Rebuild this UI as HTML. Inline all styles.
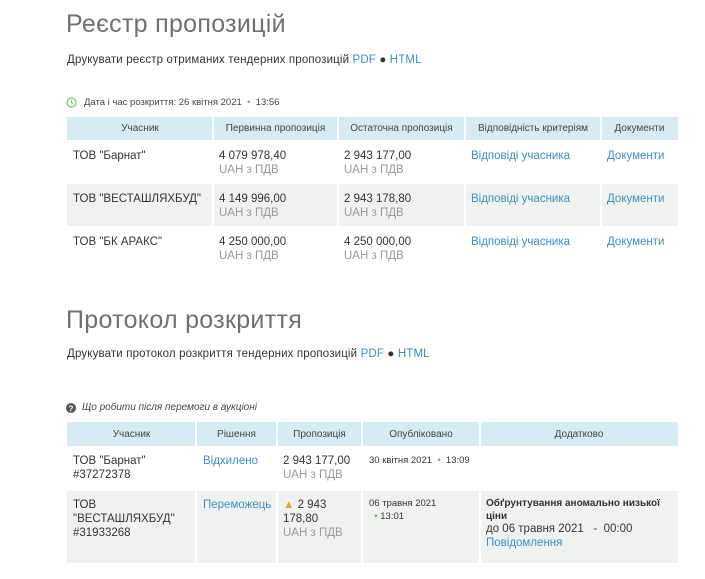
<!DOCTYPE html>
<html><head><meta charset="utf-8"><style>
body{margin:0;width:705px;height:579px;background:#fff;font-family:"Liberation Sans","DejaVu Sans",sans-serif;color:#333;position:relative;overflow:hidden}
.a{position:absolute;white-space:nowrap}
.h1{font-size:25px;color:#707070;letter-spacing:0.3px}
.p{font-size:11.5px;color:#333;letter-spacing:0.15px}
.l{color:#3a8fc4}
.hd{background:#d6ebf3;position:absolute;font-size:10px;color:#444;text-align:center;line-height:23px}
.g{background:#f0f2f0;position:absolute}
.v{position:absolute;width:2px;background:#fff}
.t{font-size:11.5px;line-height:14px}
.s{color:#999}
.gd{color:#5bb55b}
</style></head><body>
<div class="a h1" style="left:66px;top:10px">Реєстр пропозицій</div>
<div class="a p" style="left:67px;top:54px">Друкувати реєстр отриманих тендерних пропозицій <span class="l">PDF</span> ● <span class="l">HTML</span></div>

<svg class="a" style="left:66px;top:97px" width="11" height="11" viewBox="0 0 11 11"><circle cx="5.5" cy="5.5" r="4.5" fill="none" stroke="#7cc47c" stroke-width="1.3"/><path d="M5.5 3v2.7l1.8 1.2" fill="none" stroke="#7cc47c" stroke-width="1.1"/></svg>
<div class="a" style="left:84px;top:97px;font-size:9.5px;color:#444">Дата і час розкриття: 26 квітня 2021 &nbsp;<span class="gd">•</span>&nbsp; 13:56</div>

<div class="hd" style="left:67px;top:117px;width:611px;height:23px"></div>
<div class="a hd" style="left:67px;top:117px;width:146px;background:none">Учасник</div>
<div class="a hd" style="left:213px;top:117px;width:125px;background:none">Первинна пропозиція</div>
<div class="a hd" style="left:338px;top:117px;width:127px;background:none">Остаточна пропозиція</div>
<div class="a hd" style="left:465px;top:117px;width:136px;background:none">Відповідність критеріям</div>
<div class="a hd" style="left:601px;top:117px;width:77px;background:none">Документи</div>
<div class="g" style="left:67px;top:184px;width:611px;height:42px"></div>
<div class="v" style="left:212px;top:117px;height:109px"></div>
<div class="v" style="left:337px;top:117px;height:109px"></div>
<div class="v" style="left:464px;top:117px;height:109px"></div>
<div class="v" style="left:600px;top:117px;height:109px"></div>

<div class="a t" style="left:73px;top:149px">ТОВ "Барнат"</div>
<div class="a t" style="left:219px;top:149px">4 079 978,40<br><span class="s">UAH з ПДВ</span></div>
<div class="a t" style="left:344px;top:149px">2 943 177,00<br><span class="s">UAH з ПДВ</span></div>
<div class="a t l" style="left:471px;top:149px">Відповіді учасника</div>
<div class="a t l" style="left:607px;top:149px">Документи</div>

<div class="a t" style="left:73px;top:192px">ТОВ "ВЕСТАШЛЯХБУД"</div>
<div class="a t" style="left:219px;top:192px">4 149 996,00<br><span class="s">UAH з ПДВ</span></div>
<div class="a t" style="left:344px;top:192px">2 943 178,80<br><span class="s">UAH з ПДВ</span></div>
<div class="a t l" style="left:471px;top:192px">Відповіді учасника</div>
<div class="a t l" style="left:607px;top:192px">Документи</div>

<div class="a t" style="left:73px;top:235px">ТОВ "БК АРАКС"</div>
<div class="a t" style="left:219px;top:235px">4 250 000,00<br><span class="s">UAH з ПДВ</span></div>
<div class="a t" style="left:344px;top:235px">4 250 000,00<br><span class="s">UAH з ПДВ</span></div>
<div class="a t l" style="left:471px;top:235px">Відповіді учасника</div>
<div class="a t l" style="left:607px;top:235px">Документи</div>

<div class="a h1" style="left:66px;top:306px">Протокол розкриття</div>
<div class="a p" style="left:67px;top:348px">Друкувати протокол розкриття тендерних пропозицій <span class="l">PDF</span> ● <span class="l">HTML</span></div>

<svg class="a" style="left:66px;top:403px" width="10" height="10" viewBox="0 0 10 10"><circle cx="5" cy="5" r="5" fill="#555"/><text x="5" y="8.3" font-size="8" font-weight="bold" fill="#fff" text-anchor="middle" font-family="Liberation Sans">?</text></svg>
<div class="a" style="left:82px;top:402px;font-size:10px;color:#444;font-style:italic">Що робити після перемоги в аукціоні</div>

<div class="hd" style="left:67px;top:422px;width:611px;height:24px"></div>
<div class="a hd" style="left:67px;top:423px;width:129px;background:none">Учасник</div>
<div class="a hd" style="left:196px;top:423px;width:81px;background:none">Рішення</div>
<div class="a hd" style="left:277px;top:423px;width:85px;background:none">Пропозиція</div>
<div class="a hd" style="left:362px;top:423px;width:118px;background:none">Опубліковано</div>
<div class="a hd" style="left:480px;top:423px;width:198px;background:none">Додатково</div>
<div class="g" style="left:67px;top:491px;width:611px;height:72px"></div>
<div class="v" style="left:195px;top:422px;height:141px"></div>
<div class="v" style="left:276px;top:422px;height:141px"></div>
<div class="v" style="left:361px;top:422px;height:141px"></div>
<div class="v" style="left:479px;top:422px;height:141px"></div>

<div class="a t" style="left:73px;top:454px">ТОВ "Барнат"<br>#37272378</div>
<div class="a t l" style="left:203px;top:454px">Відхилено</div>
<div class="a t" style="left:283px;top:454px">2 943 177,00<br><span class="s">UAH з ПДВ</span></div>
<div class="a" style="left:369px;top:455px;font-size:9.5px">30 квітня 2021 &nbsp;<span class="gd">•</span>&nbsp; 13:09</div>

<div class="a t" style="left:73px;top:498px">ТОВ<br>"ВЕСТАШЛЯХБУД"<br>#31933268</div>
<div class="a t l" style="left:203px;top:498px">Переможець</div>
<div class="a t" style="left:283px;top:498px"><span style="color:#f0a030">▲</span> 2 943<br>178,80<br><span class="s">UAH з ПДВ</span></div>
<div class="a" style="left:369px;top:497px;font-size:9.5px;line-height:13px">06 травня 2021<br>&nbsp;&nbsp;<span class="gd">•</span> 13:01</div>
<div class="a" style="left:486px;top:497px;font-size:10px;font-weight:bold;line-height:13px">Обґрунтування аномально низької<br>ціни</div>
<div class="a t" style="left:486px;top:522px">до 06 травня 2021 &nbsp; - &nbsp;00:00<br><span class="l">Повідомлення</span></div>
</body></html>
